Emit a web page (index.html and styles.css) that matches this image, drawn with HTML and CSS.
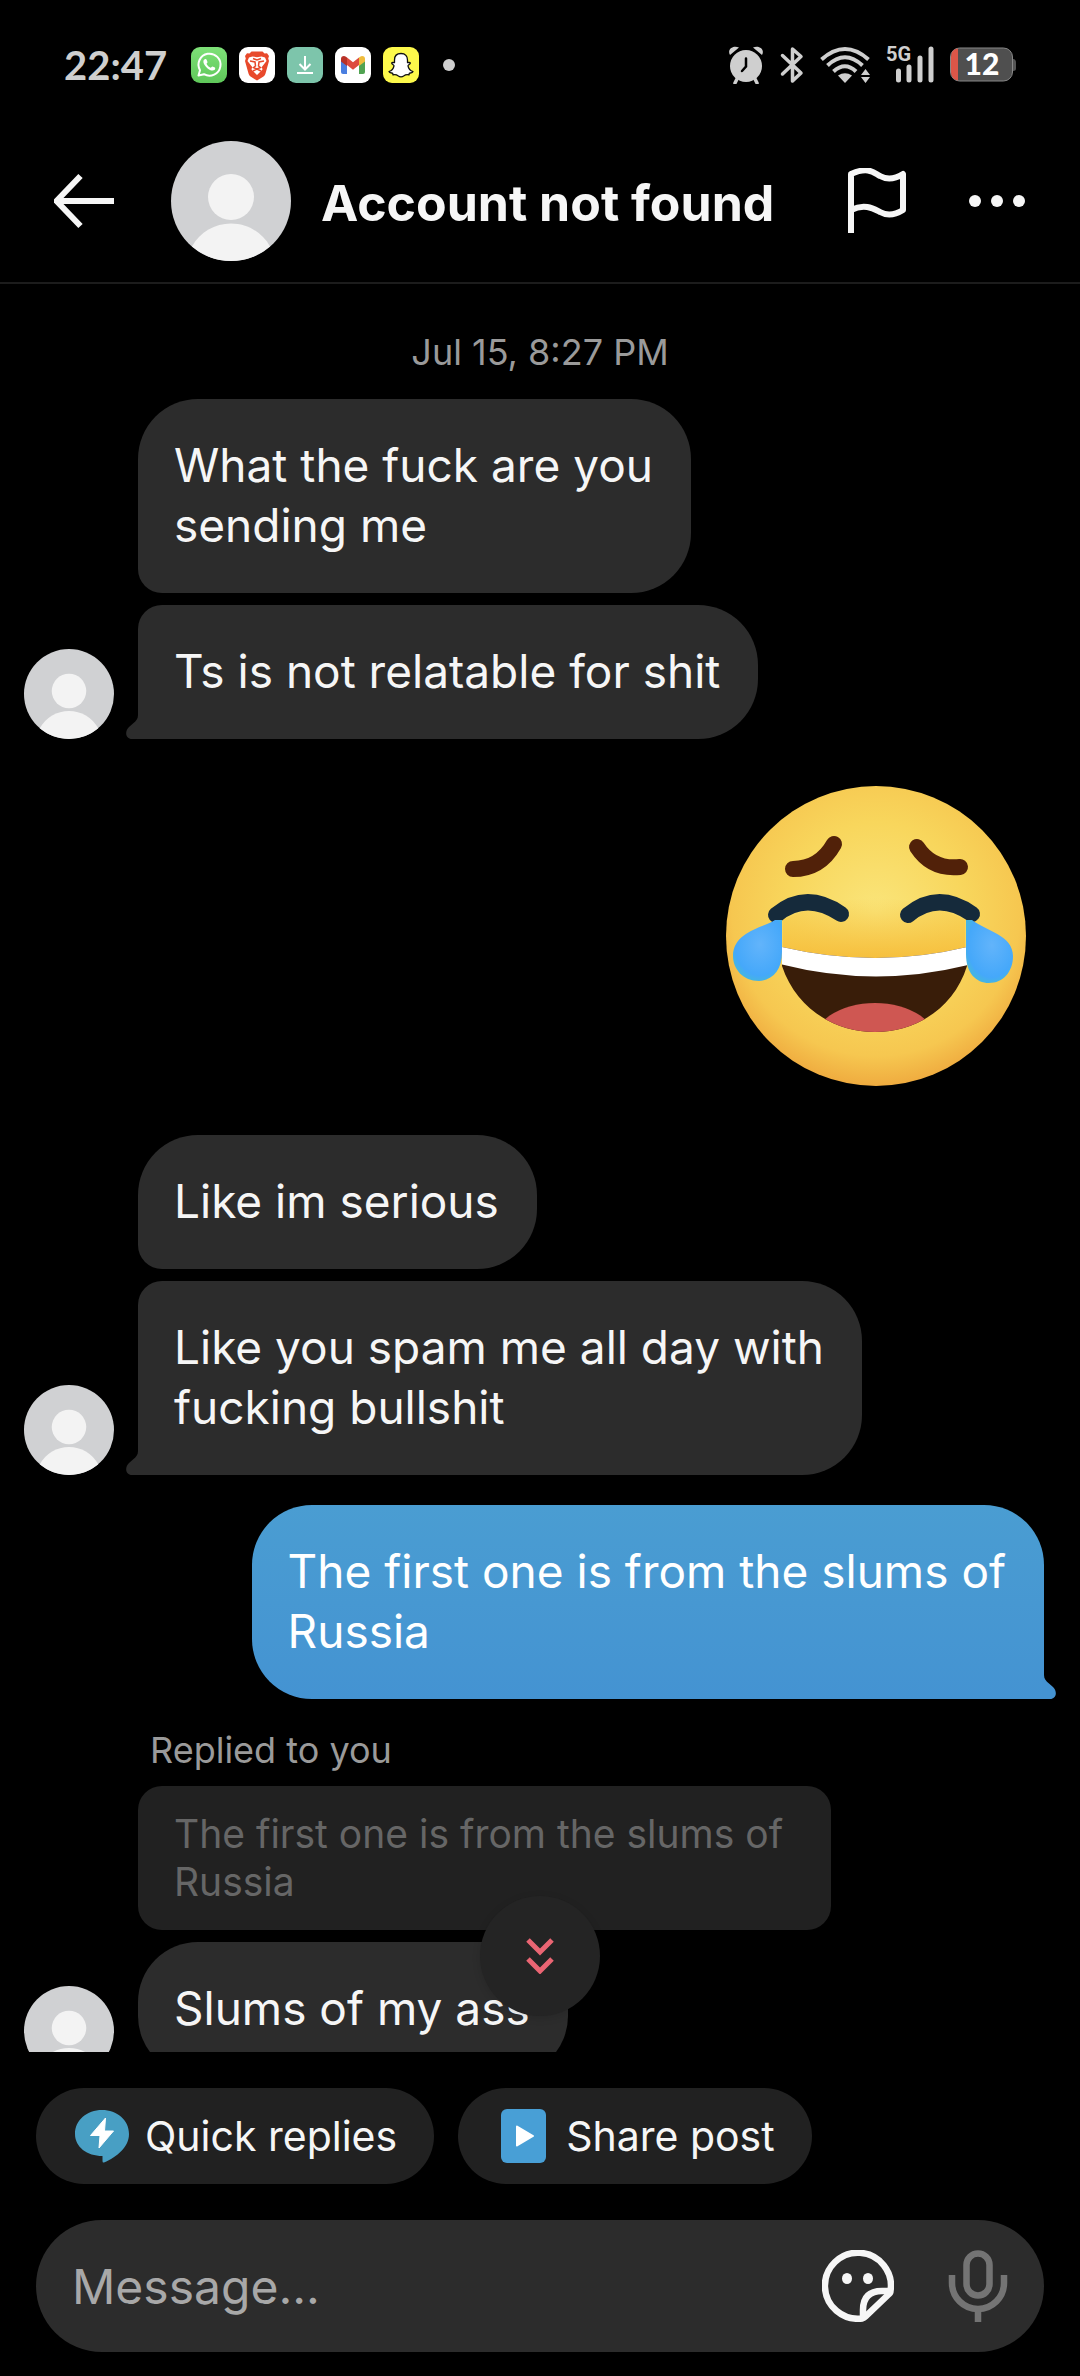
FILE: index.html
```html
<!DOCTYPE html>
<html lang="en">
<head>
<meta charset="utf-8">
<meta name="viewport" content="width=device-width, initial-scale=1">
<title>Account not found</title>
<link rel="stylesheet" href="styles.css">
</head>
<body>
<svg class="defs" aria-hidden="true">
  <symbol id="avatar" viewBox="0 0 120 120">
    <circle cx="60" cy="60" r="60" fill="#d0d1d3"/>
    <circle cx="60" cy="56" r="23" fill="#f3f3f3"/>
    <path d="M21 105.500C29 91 44 82.500 60 82.500S91 91 99 105.500A60 60 0 0 1 21 105.500Z" fill="#f3f3f3"/>
  </symbol>
  <symbol id="tail" viewBox="0 0 14 24">
    <path d="M14 0H12C12 4 10 6 7 8.500L3 12C-2 17 0 24 6 24H14Z" fill="currentColor"/>
  </symbol>
</svg>

<div class="screen">
  <div class="status">
    <time class="clock">22:47</time>
    <div class="notices">
      <svg class="app" viewBox="0 0 36 36"><defs><linearGradient id="wa" x2="0" y2="1"><stop stop-color="#7ee178"/><stop offset="1" stop-color="#5fc75a"/></linearGradient></defs><rect width="36" height="36" rx="9" fill="url(#wa)"/><path d="M7.500 28.500L9 23.200A11 11 0 1 1 13 27.200Z" fill="none" stroke="#fff" stroke-width="2" stroke-linejoin="round"/><path d="M13.800 12.300C14.600 11.800 15.300 12 15.600 12.700L16.500 14.900C16.700 15.600 15.600 16.300 15.500 16.800C16.400 18.700 17.800 20 19.700 20.700C20.300 20.500 20.900 19.200 21.500 19.400L23.900 20.600C24.500 21 24.200 22.500 23.400 23.100C19.800 25.500 12 18.500 12.400 14.200C12.500 13.400 13.100 12.700 13.800 12.300Z" fill="#fff"/></svg>
      <svg class="app" viewBox="0 0 36 36"><rect width="36" height="36" rx="9" fill="#fff"/><path d="M12.500 4.500H23.500L25.500 6.500L28 6.200L30 9L29.200 11.500L30 14L26.500 26.500Q26 28.500 24.500 29.500L18 33.500L11.500 29.500Q10 28.500 9.500 26.500L6 14L6.800 11.500L6 9L8 6.200L10.500 6.500Z" fill="#e8492b"/><path d="M10 10.500L13.500 9.500L18 10.200L22.500 9.500L26 10.500L27.500 14L22.800 20L23.500 22.500L18 28L12.500 22.500L13.200 20L8.500 14Z" fill="#fff"/><path d="M11 14L16 15L16.500 19L14.500 20.500L18 22L21.500 20.500L19.500 19L20 15L25 14M14 24L18 22L22 24M14 11.500L18 13L22 11.500" fill="none" stroke="#e8492b" stroke-width="1.500"/></svg>
      <svg class="app" viewBox="0 0 36 36"><rect width="36" height="36" rx="9" fill="#7dc5ab"/><path d="M18 9V22M12.500 17L18 22.500L23.500 17M10 26H26" fill="none" stroke="#fff" stroke-width="2"/></svg>
      <svg class="app" viewBox="0 0 36 36"><rect width="36" height="36" rx="9" fill="#fff"/><path d="M6 12L12 16.500V27H8Q6 27 6 25Z" fill="#4a7ee0"/><path d="M30 12L24 16.500V27H28Q30 27 30 25Z" fill="#51a352"/><path d="M6 12Q6 9 9 9Q10.500 9 12 10.500V19L6 14.500Z" fill="#b83228"/><path d="M30 12Q30 9 27 9Q25.500 9 24 10.500V19L30 14.500Z" fill="#efbc3d"/><path d="M12 10.500L18 15.200L24 10.500V18L18 22.700L12 18Z" fill="#dd4b3e"/></svg>
      <svg class="app" viewBox="0 0 36 36"><rect width="36" height="36" rx="9" fill="#fdf94b"/><path d="M18 6.500C13.500 6.500 11.500 9.500 11.500 13V15.500C10.500 15.700 9 15 8.700 16C8.500 17.200 11 17.600 11 18.800C10.500 21.500 8.500 23.700 6 24.500C6.500 26.200 9 25.800 9.700 26.300L10 27.800C12 27.300 13.500 27.500 15 28.800C17 30.200 19 30.200 21 28.800C22.500 27.500 24 27.300 26 27.800L26.300 26.300C27 25.800 29.500 26.200 30 24.500C27.500 23.700 25.500 21.500 25 18.800C25 17.600 27.500 17.200 27.300 16C27 15 25.500 15.700 24.500 15.500V13C24.500 9.500 22.500 6.500 18 6.500Z" fill="#fff" stroke="#111" stroke-width="1.300" stroke-linejoin="round"/></svg>
    </div>
    <span class="more-dot"></span>
    <div class="system">
      <svg width="36" height="38" viewBox="0 0 36 38"><circle cx="18" cy="20" r="16" fill="#cfcfcf"/><path d="M9 33L7 37M27 33L29 37" stroke="#cfcfcf" stroke-width="3.500" stroke-linecap="round"/><path d="M2 9C-1 4 4-1 11 1.500ZM34 9C37 4 32-1 25 1.500Z" fill="#cfcfcf"/><path d="M18 12.500V20.500L14 25" fill="none" stroke="#000" stroke-width="2.500" stroke-linecap="round"/></svg>
      <svg width="24" height="38" viewBox="0 0 24 38"><path d="M2.500 9.500L21 27L12.500 35V3L21 10.500L2.500 28" fill="none" stroke="#cfcfcf" stroke-width="3.500" stroke-linejoin="round" stroke-linecap="round"/></svg>
      <svg width="50" height="38" viewBox="0 0 50 38"><g fill="none" stroke="#cfcfcf" stroke-width="4"><path d="M1.500 13.500Q25-7.500 48.500 13.500"/><path d="M7.500 19.500Q25 3 42.500 19.500"/><path d="M13.500 25.500Q25 15 36 25.500"/></g><path d="M18 29.500Q25 25 32 29.500L25 37Z" fill="#cfcfcf"/><path d="M41 29L45.500 23L50 29ZM41 31H50L45.500 37Z" fill="#cfcfcf"/></svg>
      <svg width="48" height="54" viewBox="0 -8 48 54"><text class="net" x="0" y="15">5G</text><path d="M12.500 25V34M23 21V34M34 12V34M45 3V34" stroke="#cfcfcf" stroke-width="5" stroke-linecap="round"/></svg>
      <svg width="66" height="52" viewBox="0 -8 66 52"><path d="M62 12C66 12 66 14 66 17V20C66 23 66 24 62 24Z" fill="#555"/><rect x=".500" y="1" width="62" height="33" rx="9" fill="#4f4f4f" stroke="#888" stroke-width="1"/><path d="M8 1.500V33.500Q1 32 1 25V10Q1 2 8 1.500Z" fill="#dc5648"/><text class="level" x="32" y="28" text-anchor="middle">12</text></svg>
    </div>
  </div>

  <header class="header">
    <button class="icon-btn" aria-label="Back"><svg width="60" height="60" viewBox="0 0 60 60"><path d="M60 30H4M26.500 5L2.500 30L26.500 55" fill="none" stroke="#f6f6f6" stroke-width="6" stroke-linejoin="round"/></svg></button>
    <svg class="avatar-lg"><use href="#avatar"/></svg>
    <h1 class="title">Account not found</h1>
    <button class="icon-btn" aria-label="Report"><svg width="60" height="66" viewBox="0 0 60 66"><path d="M4 65V6C22-2 27 5 33 8C40 12 48 11 56 6V42C48 47 40 48 33 44C27 41 18 35 4 42" fill="none" stroke="#f6f6f6" stroke-width="6" stroke-linejoin="round"/></svg></button>
    <button class="icon-btn" aria-label="More"><svg width="60" height="12" viewBox="0 0 60 12"><g fill="#f6f6f6"><circle cx="8" cy="6" r="6"/><circle cx="30" cy="6" r="6"/><circle cx="52" cy="6" r="6"/></g></svg></button>
  </header>

  <div class="chat-wrap">
    <main class="chat">
      <time class="date">Jul 15, 8:27 PM</time>

      <section class="group">
        <svg class="avatar"><use href="#avatar"/></svg>
        <div class="stack">
          <p class="bubble first">What the fuck are you<br>sending me</p>
          <p class="bubble last">Ts is not relatable for shit<svg class="tail"><use href="#tail"/></svg></p>
        </div>
      </section>

      <svg class="sticker" viewBox="0 0 300 300" role="img" aria-label="Face with tears of joy">
        <defs>
          <radialGradient id="face" cx=".5" cy=".42" r=".6"><stop stop-color="#fae57a"/><stop offset=".5" stop-color="#f8d65c"/><stop offset=".8" stop-color="#f6c750"/><stop offset="1" stop-color="#eea63c"/></radialGradient>
          <linearGradient id="cheek" x2="0" y2="1"><stop stop-color="#f6c443" stop-opacity="0"/><stop offset="1" stop-color="#f6bf3d"/></linearGradient>
          <radialGradient id="drop" cx=".55" cy=".4" r=".6"><stop stop-color="#62b4fb"/><stop offset=".85" stop-color="#45a8fa"/><stop offset="1" stop-color="#45b4e4"/></radialGradient>
          <clipPath id="mouth"><path d="M56 161Q150 183 241 161V180C228 222 190 246 149 246S70 222 56 180Z"/></clipPath>
        </defs>
        <circle cx="150" cy="150" r="150" fill="url(#face)"/>
        <path d="M57 134Q150 90 239 134V162Q150 183 57 162Z" fill="url(#cheek)"/>
        <g clip-path="url(#mouth)">
          <rect x="50" y="150" width="200" height="100" fill="#391d09"/>
          <ellipse cx="149" cy="260" rx="64" ry="43" fill="#cf5752"/>
          <path d="M50 150H250V177Q150 204 50 177Z" fill="#fff"/>
        </g>
        <g fill="none" stroke-linecap="round">
          <path d="M67 83Q94 83 108 58M191 61Q206 84 234 81" stroke="#512109" stroke-width="16"/>
          <path d="M50 129Q80 104 115 128M182 129Q212 104 246 128" stroke="#152a3b" stroke-width="16"/>
        </g>
        <path d="M56 134V166C56 184 47 194 33 195C17 195 7 183 7 170C7 145 39 141 49 134Z" fill="url(#drop)"/>
        <path d="M240 134V168C240 187 250 197 263 197C277 197 287 186 287 170C287 149 260 145 246 134Z" fill="url(#drop)"/>
      </svg>

      <section class="group">
        <svg class="avatar"><use href="#avatar"/></svg>
        <div class="stack">
          <p class="bubble first">Like im serious</p>
          <p class="bubble last">Like you spam me all day with<br>fucking bullshit<svg class="tail"><use href="#tail"/></svg></p>
        </div>
      </section>

      <p class="bubble sent">The first one is from the slums of<br>Russia<svg class="tail"><use href="#tail"/></svg></p>

      <section class="group reply">
        <svg class="avatar"><use href="#avatar"/></svg>
        <div class="stack">
          <span class="reply-label">Replied to you</span>
          <blockquote class="quote">The first one is from the slums of Russia</blockquote>
          <p class="bubble single">Slums of my ass</p>
        </div>
      </section>
    </main>
    <button class="jump" aria-label="Jump to latest"><svg width="28" height="36" viewBox="0 0 28 36"><path d="M2 2L14 14L26 2M2 21L14 33L26 21" fill="none" stroke="#ea6573" stroke-width="5"/></svg></button>
  </div>

  <footer class="composer">
    <div class="chips">
      <button class="chip"><svg width="54" height="54" viewBox="0 0 54 54"><path d="M27 1C42 1 54 11 54 25C54 38 42 48 29 53.500Q27.500 54 27.500 52V47C12 47 0 38 0 25C0 11 12 1 27 1Z" fill="#489fc4"/><path d="M30.500 9L15.500 26.500H25L24 39L38.500 22H29.500Z" fill="#fff" stroke="#fff" stroke-linejoin="round"/></svg><span>Quick replies</span></button>
      <button class="chip"><svg class="post-icon" width="45" height="54" viewBox="0 0 45 54"><rect width="45" height="54" rx="6" fill="#489fd6"/><path d="M16 17.500L32 27L16 36.500Z" fill="#fff" stroke="#fff" stroke-width="2" stroke-linejoin="round"/></svg><span>Share post</span></button>
    </div>
    <div class="field">
      <input class="input" type="text" placeholder="Message..." aria-label="Message">
      <button class="icon-btn" aria-label="Stickers"><svg width="72" height="72" viewBox="0 0 72 72"><g fill="none" stroke="#f6f6f6" stroke-width="6.500" stroke-linejoin="round"><path d="M68.500 41A33 33 0 1 0 40 68.500Q42 68 43.500 66.500L67 44Q68.500 43 68.500 41Z"/><path d="M41 68V60Q41 41 60 41H68"/></g><ellipse cx="25" cy="28.500" rx="5" ry="5.500" fill="#f6f6f6"/><ellipse cx="46" cy="28.500" rx="5" ry="5.500" fill="#f6f6f6"/></svg></button>
      <button class="icon-btn" aria-label="Voice message"><svg width="60" height="72" viewBox="0 0 60 72"><g fill="none" stroke="#747474" stroke-width="6.500"><rect x="18.500" y="3.500" width="23" height="42" rx="11.500"/><path d="M4 25V33A26 26 0 0 0 56 33V25M30 59V72"/></g></svg></button>
    </div>
  </footer>
</div>
</body>
</html>
```
FILE: styles.css
```css
* { box-sizing: border-box; }

body {
  margin: 0;
  background: #000;
  color: #f6f6f6;
  font-family: Inter, "Liberation Sans", sans-serif;
}

button {
  padding: 0;
  border: 0;
  background: none;
  color: inherit;
  font: inherit;
}

svg { display: block; flex: none; }
p, h1, blockquote { margin: 0; }

.defs { position: absolute; width: 0; height: 0; }

.screen {
  display: flex;
  flex-direction: column;
  height: 100vh;
}

/* Status bar */
.status {
  display: flex;
  align-items: center;
  height: 120px;
  padding: 10px 64px 0;
}
.clock {
  color: #cfcfcf;
  font: 700 40px/48px Lato, sans-serif;
}
.notices { display: flex; gap: 12px; margin-left: 24px; }
.app { width: 36px; height: 36px; }
.more-dot {
  width: 12px;
  height: 12px;
  margin-left: 24px;
  border-radius: 50%;
  background: #cfcfcf;
}
.system {
  display: flex;
  align-items: center;
  gap: 16px;
  margin-left: auto;
}
.net { fill: #cfcfcf; font: 700 20px Roboto, sans-serif; }
.level { fill: #fff; font: 900 30px Lato, sans-serif; }

/* Header */
.header {
  display: flex;
  align-items: center;
  padding: 21px 53px 21px 54px;
  border-bottom: 2px solid #1c1c1c;
}
.avatar-lg { width: 120px; height: 120px; margin-left: 57px; }
.title {
  flex: 1;
  margin-left: 30px;
  padding-top: 4px;
  font-size: 50px;
  font-weight: 700;
  line-height: 60px;
  white-space: nowrap;
}
.header .icon-btn + .icon-btn { margin-left: 60px; }

/* Conversation */
.chat-wrap {
  position: relative;
  flex: 1;
  min-height: 0;
}
.chat {
  display: flex;
  flex-direction: column;
  height: 100%;
  padding: 44px 36px 24px 24px;
  overflow-y: auto;
  scrollbar-width: none;
}
.chat > * { flex: none; }
.date {
  margin-bottom: 23px;
  padding-left: 12px;
  color: #9a9a9a;
  font-size: 36px;
  line-height: 48px;
  text-align: center;
}
.group { display: flex; align-items: flex-end; gap: 24px; }
.avatar { width: 90px; height: 90px; }
.stack {
  display: flex;
  flex: 1;
  flex-direction: column;
  align-items: flex-start;
  gap: 12px;
}
.bubble {
  position: relative;
  max-width: 812px;
  padding: 36px 38px 38px 36px;
  border-radius: 60px;
  background: #2c2c2c;
  color: #f6f6f6;
  font-size: 46px;
  line-height: 60px;
}
.first { border-bottom-left-radius: 24px; }
.last { border-radius: 24px 60px 60px 0; }
.tail {
  position: absolute;
  bottom: 0;
  left: -12px;
  width: 14px;
  height: 24px;
  color: #2c2c2c;
}
.sticker {
  align-self: flex-end;
  width: 300px;
  height: 300px;
  margin: 47px 18px 49px 0;
}
.sent {
  align-self: flex-end;
  margin-top: 30px;
  border-bottom-right-radius: 0;
  background: linear-gradient(#4a9dd2, #4493d2);
  color: #fff;
}
.sent .tail {
  right: -12px;
  left: auto;
  color: #4493d2;
  transform: scaleX(-1);
}
.reply { margin-top: 27px; }
.reply-label {
  padding-left: 12px;
  color: #9a9a9a;
  font-size: 36px;
  line-height: 48px;
}
.quote {
  max-width: 693px;
  padding: 24px 36px;
  border-radius: 24px;
  background: #212121;
  color: #666;
  font-size: 39px;
  line-height: 48px;
}
.jump {
  position: absolute;
  bottom: 36px;
  left: 50%;
  display: flex;
  align-items: center;
  justify-content: center;
  width: 120px;
  height: 120px;
  margin-left: -60px;
  border-radius: 50%;
  background: #242424;
  box-shadow: 0 2px 8px rgba(0, 0, 0, .12);
}

/* Composer */
.composer { padding: 36px 36px 24px; }
.chips { display: flex; gap: 24px; margin-bottom: 36px; }
.chip {
  display: flex;
  align-items: center;
  gap: 16px;
  height: 96px;
  padding: 0 37px 0 39px;
  border-radius: 48px;
  background: #212121;
  font-size: 41px;
}
.post-icon { margin: 0 4px; }
.field {
  display: flex;
  align-items: center;
  gap: 54px;
  height: 132px;
  padding: 0 36px;
  border-radius: 66px;
  background: #2c2c2c;
}
.input {
  flex: 1;
  min-width: 0;
  padding: 0;
  border: 0;
  outline: 0;
  background: none;
  color: #f6f6f6;
  font: inherit;
  font-size: 48px;
}
.input::placeholder { color: #a8a8a8; opacity: 1; }
```
